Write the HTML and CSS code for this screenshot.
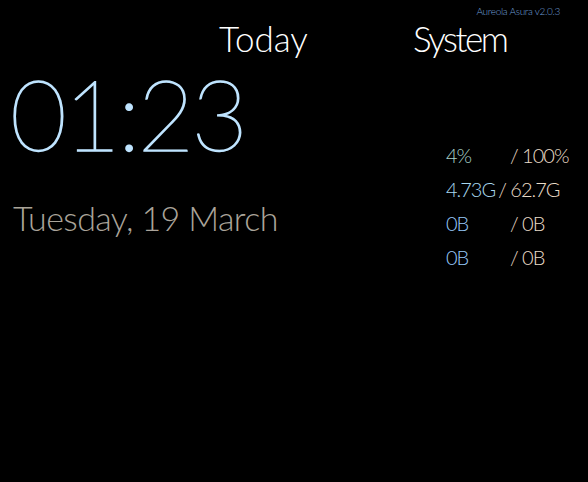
FILE: index.html
```html
<!DOCTYPE html>
<html>
<head>
<meta charset="utf-8">
<link rel="stylesheet" href="styles.css">
</head>
<body>
<div class="version">Aureola Asura v2.0.3</div>
<div class="main">
  <section class="today">
    <h2 class="head">Today</h2>
    <div class="time">01:23</div>
    <div class="date">Tuesday, 19 March</div>
  </section>
  <section class="system">
    <h2 class="head">System</h2>
    <div class="stats">
      <div class="row"><span class="val pct">4%</span><span class="tot">/ 100%</span></div>
      <div class="row"><span class="val mem">4.73G</span><span class="tot">/ 62.7G</span></div>
      <div class="row"><span class="val net">0B</span><span class="tot">/ 0B</span></div>
      <div class="row"><span class="val net">0B</span><span class="tot">/ 0B</span></div>
    </div>
  </section>
</div>
</body>
</html>
```
FILE: styles.css
```css
html, body {
  margin: 0;
  padding: 0;
  background: #000;
  height: 100%;
}
body {
  font-family: "Lato", "DejaVu Sans", sans-serif;
  font-weight: 300;
  color: #fff;
}
.version {
  text-align: right;
  font-size: 10px;
  letter-spacing: -0.3px;
  color: #6f9fd8;
  padding: 5px 28px 0 0;
  height: 13px;
}
.main {
  display: grid;
  grid-template-columns: 400px 1fr;
}
.head {
  font-weight: 300;
  font-size: 35px;
  margin: 0;
  line-height: 40px;
}
.today .head {
  padding-left: 219px;
}
.system .head {
  padding-left: 13px;
  letter-spacing: -2.5px;
}
.time {
  font-size: 98px;
  font-weight: 200;
  letter-spacing: -3px;
  line-height: 90px;
  color: #bfe4ff;
  -webkit-text-stroke: 1.4px #bfe4ff;
  padding-left: 10px;
  margin-top: 10px;
}
.date {
  font-size: 34px;
  letter-spacing: -0.6px;
  line-height: 40px;
  color: #aaa49a;
  padding-left: 13px;
  margin-top: 40px;
}
.stats {
  padding-left: 46px;
  margin-top: 80px;
  font-size: 20px;
  letter-spacing: -1px;
}
.row {
  display: flex;
  height: 34px;
  align-items: center;
}
.val {
  width: 64px;
}
.val.mem {
  width: auto;
  margin-right: 3px;
}
.pct { color: #a8d0c8; }
.mem { color: #a8d8f0; }
.net { color: #96c8f8; }
.tot { color: #eadcc8; }
```
